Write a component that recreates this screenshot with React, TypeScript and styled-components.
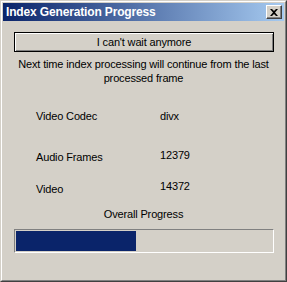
import React from "react";
import styled, { createGlobalStyle } from "styled-components";

const Global = createGlobalStyle`
  html, body { margin: 0; padding: 0; background: #d4d0c8; }
  body { width: 287px; height: 282px; overflow: hidden; }
`;

const Window = styled.div`
  box-sizing: border-box;
  width: 287px;
  height: 282px;
  background: #d4d0c8;
  border: 1px solid;
  border-color: #d4d0c8 #404040 #404040 #d4d0c8;
  font-family: "Liberation Sans", Arial, sans-serif;
  color: #000;
`;

const Inner = styled.div`
  box-sizing: border-box;
  height: 100%;
  border: 1px solid;
  border-color: #ffffff #808080 #808080 #ffffff;
  padding: 1px;
  display: flex;
  flex-direction: column;
`;

const TitleBar = styled.div`
  height: 18px;
  display: flex;
  align-items: center;
  justify-content: space-between;
  padding: 0 2px 0 3px;
  background: linear-gradient(to right, #0a246a, #a6caf0);
`;

const Title = styled.span`
  color: #fff;
  font-weight: bold;
  font-size: 12px;
  font-family: "Liberation Sans", Arial, sans-serif;
  letter-spacing: -0.15px;
`;

const CloseButton = styled.div`
  box-sizing: border-box;
  width: 16px;
  height: 14px;
  background: #d4d0c8;
  border: 1px solid;
  border-color: #ffffff #404040 #404040 #ffffff;
  box-shadow: inset -1px -1px 0 #808080;
  display: flex;
  align-items: center;
  justify-content: center;
`;

const Content = styled.div`
  flex: 1;
  display: flex;
  flex-direction: column;
  padding: 11px 11px 0 11px;
  font-size: 11px;
  letter-spacing: -0.15px;
`;

const PushButton = styled.div`
  box-sizing: border-box;
  height: 20px;
  width: 260px;
  border: 1px solid #000;
  background: #d4d0c8;
  box-shadow: inset 1px 1px 0 #ffffff, inset -1px -1px 0 #808080;
  display: flex;
  align-items: center;
  justify-content: center;
`;

const Message = styled.div`
  margin-top: 5px;
  text-align: center;
  line-height: 14px;
  white-space: nowrap;
`;

const InfoGrid = styled.div`
  display: grid;
  grid-template-columns: 124px 1fr;
  grid-template-rows: 41px 30px 20px;
  padding-left: 22px;
  margin-top: 24px;
`;

const Label = styled.div<{ $shift?: number }>`
  line-height: 14px;
  padding-top: ${(p) => p.$shift ?? 0}px;
`;

const ProgressLabel = styled.div`
  margin-top: 7px;
  text-align: center;
  line-height: 14px;
`;

const Track = styled.div`
  box-sizing: border-box;
  margin-top: 8px;
  width: 260px;
  height: 24px;
  border: 1px solid;
  border-color: #808080 #ffffff #ffffff #808080;
  padding: 1px;
`;

const Fill = styled.div`
  height: 100%;
  background: #0a246a;
`;

const rows: [string, string, number, number][] = [
  ["Video Codec", "divx", 0, 0],
  ["Audio Frames", "12379", 0, -2],
  ["Video", "14372", 2, -1],
];

export default function App() {
  const progress = 0.47;
  return (
    <>
      <Global />
      <Window>
        <Inner>
          <TitleBar>
            <Title>Index Generation Progress</Title>
            <CloseButton>
              <svg width="8" height="7" viewBox="0 0 8 7">
                <path d="M0 0h2l2 2 2-2h2L5 3.5 8 7H6L4 5 2 7H0l3-3.5z" fill="#000" />
              </svg>
            </CloseButton>
          </TitleBar>
          <Content>
            <PushButton>I can't wait anymore</PushButton>
            <Message>
              Next time index processing will continue from the last
              <br />
              processed frame
            </Message>
            <InfoGrid>
              {rows.map(([k, v, ks, vs]) => (
                <React.Fragment key={k}>
                  <Label $shift={ks}>{k}</Label>
                  <Label style={{ marginTop: vs }}>{v}</Label>
                </React.Fragment>
              ))}
            </InfoGrid>
            <ProgressLabel>Overall Progress</ProgressLabel>
            <Track>
              <Fill style={{ width: `${progress * 100}%` }} />
            </Track>
          </Content>
        </Inner>
      </Window>
    </>
  );
}
